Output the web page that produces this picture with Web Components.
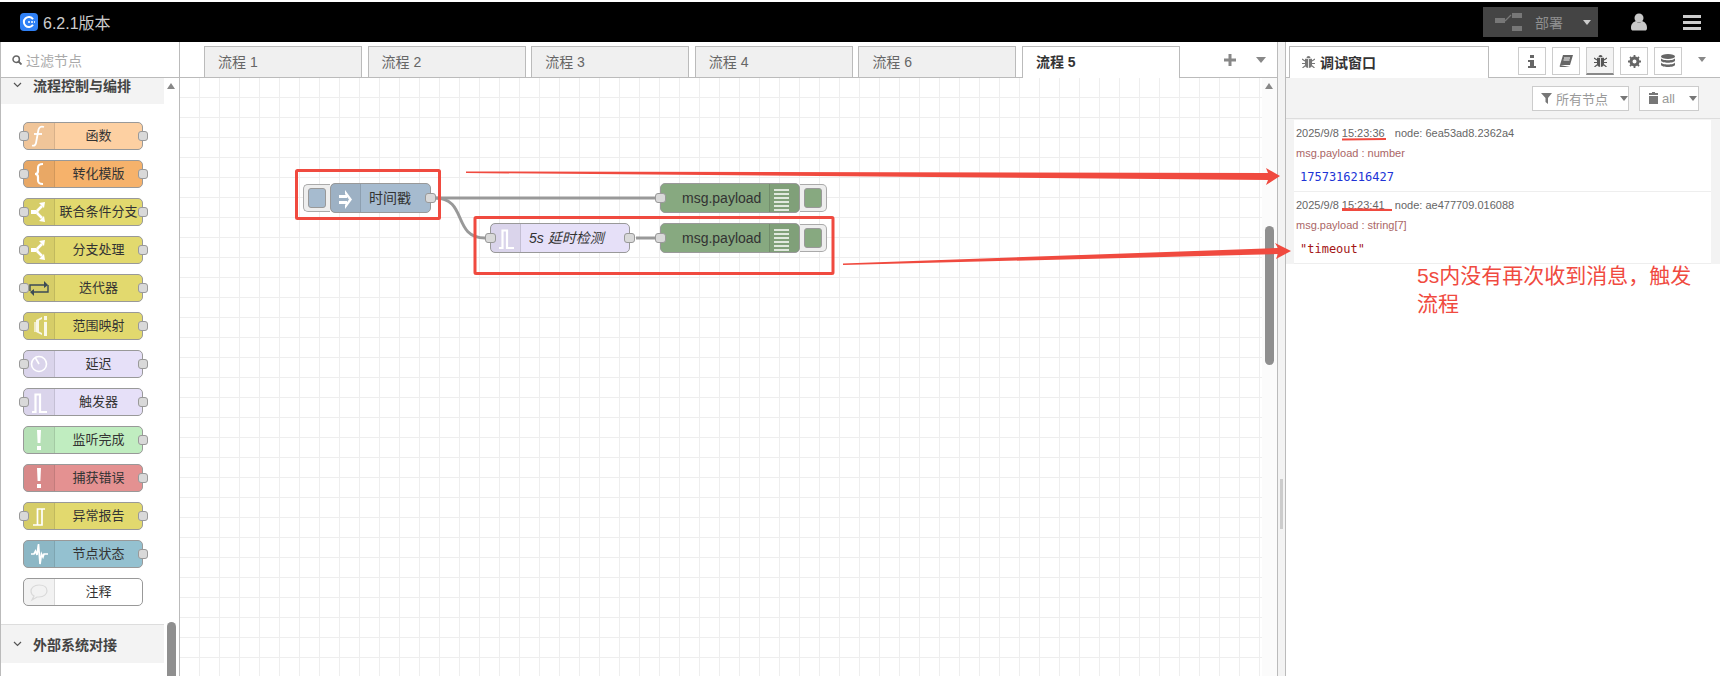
<!DOCTYPE html>
<html lang="zh">
<head>
<meta charset="utf-8">
<title>流程编辑器</title>
<style>
  html, body { margin: 0; height: 676px; overflow: hidden; background: #fff; }
  body { font-family: "Liberation Sans", "Noto Sans CJK SC", sans-serif; }
  editor-app { height: 676px; }
</style>
</head>
<body>
<editor-app>
  <top-bar slot="top"></top-bar>
  <node-palette slot="left">
    <palette-node icon="fn" color="#fdd0a2" in out>函数</palette-node>
    <palette-node icon="brace" color="#f6b26b" in out>转化模版</palette-node>
    <palette-node icon="switch" color="#e2d96e" in out>联合条件分支</palette-node>
    <palette-node icon="switch" color="#e2d96e" in out>分支处理</palette-node>
    <palette-node icon="loop" color="#e2d96e" in out>迭代器</palette-node>
    <palette-node icon="range" color="#e2d96e" in out>范围映射</palette-node>
    <palette-node icon="clock" color="#e6e0f8" in out>延迟</palette-node>
    <palette-node icon="pulse" color="#e6e0f8" in out>触发器</palette-node>
    <palette-node icon="alert" color="#c0edc0" out>监听完成</palette-node>
    <palette-node icon="alert" color="#e49191" out>捕获错误</palette-node>
    <palette-node icon="report" color="#e2d96e" in out>异常报告</palette-node>
    <palette-node icon="wave" color="#94c1d0" out>节点状态</palette-node>
    <palette-node icon="bubble" color="#ffffff">注释</palette-node>
  </node-palette>
  <flow-canvas slot="center">
    <flow-node x="330" y="183" w="101" color="#a6bbcf" icon="arrow" button="left" out>时间戳</flow-node>
    <flow-node x="660" y="183" w="140" color="#87a980" icon="list" button="right" in>msg.payload</flow-node>
    <flow-node x="490" y="223" w="140" color="#e6e0f8" icon="pulse" in out italic>5s 延时检测</flow-node>
    <flow-node x="660" y="223" w="140" color="#87a980" icon="list" button="right" in>msg.payload</flow-node>
  </flow-canvas>
  <debug-sidebar slot="right">
    <debug-message date="2025/9/8" time="15:23:36" node="6ea53ad8.2362a4" path="msg.payload : number" kind="number">1757316216427</debug-message>
    <debug-message date="2025/9/8" time="15:23:41" node="ae477709.016088" path="msg.payload : string[7]" kind="string">"timeout"</debug-message>
  </debug-sidebar>
  <red-marks slot="over"></red-marks>
</editor-app>

<script>
// white glyphs are drawn in a 30x28 box, same box for palette and canvas nodes
const NODE_ICONS = {
  fn: '<path d="M20 5c-3-1-5 0-5.600 3L12 21c-.5 2.500-2 3-4 2.500" fill="none" stroke="#fff" stroke-width="1.800"/><path d="M10 12h8" stroke="#fff" stroke-width="1.800"/>',
  brace: '<path d="M19 4c-4 0-5 1-5 4v3c0 2-1 3-3 3 2 0 3 1 3 3v3c0 3 1 4 5 4" fill="none" stroke="#fff" stroke-width="2.200"/>',
  switch: '<path d="M7 12h5l3 2-3 2H7z" fill="#fff"/><path d="M13 13l5-5M13 15l5 5" stroke="#fff" stroke-width="2.600"/><path d="M15 5l6-1-1 6zM15 23l6 1-1-6z" fill="#fff"/>',
  loop: '<path d="M6 17v-6h15M24 11v7H9" fill="none" stroke="#3c4a55" stroke-width="1.400"/><path d="M20 7l4 4-4 3zM10 15l-4 3 4 4z" fill="#3c4a55"/>',
  range: '<path d="M20 4h3v20h-3zM12 8l6-3v2l-3 1.500v11L18 21v2l-6-3z" fill="#fff" opacity=".85"/><path d="M20 8h3v2h-3z" fill="#e2d96e"/><path d="M10 10h2v10h-2z" fill="#fff" opacity=".6"/>',
  clock: '<circle cx="15" cy="14" r="7.500" fill="none" stroke="#fff" stroke-width="1.600"/><path d="M11.500 8l3.500 6" stroke="#fff" stroke-width="1.600"/>',
  pulse: '<path d="M8 24h3.500V6.500h4.500V24h7" fill="none" stroke="#fff" stroke-width="2.200"/>',
  report: '<path d="M9 23h4.500V7H21M18 7v16h-4.500" fill="none" stroke="#fff" stroke-width="1.700"/>',
  alert: '<path d="M13 4h4l-.6 13h-2.800zM13 20h4v4h-4z" fill="#fff"/>',
  wave: '<path d="M7 14h3l1.500-3 1.500 4 1.500-11 1.500 20 1.500-10 1.500 3 1-3h4" fill="none" stroke="#fff" stroke-width="1.700"/>',
  bubble: '<path d="M15 7c6 0 8 3 8 6 0 3-3 6-8 6h-2l-5 3 2-4c-2-1-3-3-3-5 0-3 3-6 8-6z" fill="none" stroke="#d9d9d9" stroke-width="1.200"/>',
  arrow: '<path d="M8 11h8v3H8zM8 17h8v3H8zM14 6l7 9.500-7 9.500v-4l4-5.500-4-5.500z" fill="#fff"/>',
  list: '<path d="M4 6h15M4 10h15M4 14h15M4 18h15M4 22h15M4 26h15" stroke="#fff" stroke-width="1.400"/>'
};

class EditorApp extends HTMLElement {
  constructor() {
    super();
    this.attachShadow({ mode: 'open' });
    this.shadowRoot.innerHTML = `
      <style>
        :host { display: flex; flex-direction: column; position: relative; width: 1720px; overflow: hidden; }
        .main { flex: 1; display: flex; min-height: 0; }
        .sep { width: 7px; flex: none; background: #f3f3f3; border-left: 1px solid #bbb; border-right: 1px solid #bbb; display: flex; align-items: center; justify-content: center; }
        .sep i { display: block; width: 3px; height: 50px; background: #ccc; margin-top: 290px; }
      </style>
      <slot name="top"></slot>
      <div class="main">
        <slot name="left"></slot>
        <slot name="center"></slot>
        <div class="sep"><i></i></div>
        <slot name="right"></slot>
      </div>
      <slot name="over"></slot>
    `;
  }
}

class TopBar extends HTMLElement {
  constructor() {
    super();
    this.attachShadow({ mode: 'open' });
    this.shadowRoot.innerHTML = `
      <style>
        :host { display: flex; align-items: center; height: 40px; margin-top: 2px; background: #000; color: #ccc; flex: none; }
        .logo { margin-left: 20px; width: 18px; height: 18px; }
        .title { margin-left: 5px; font-size: 16px; }
        .deploy { margin-left: auto; width: 115px; height: 30px; background: #444; display: flex; align-items: center; color: #8f8f8f; font-size: 14px; }
        .deploy svg { margin-left: 12px; }
        .deploy span { margin-left: 12px; }
        .deploy b { margin-left: 20px; border: 4.500px solid transparent; border-top: 5px solid #ccc; border-bottom: 0; }
        .user { margin-left: 33px; }
        .menu { margin-left: 36px; margin-right: 19px; }
      </style>
      <svg class="logo" viewBox="0 0 18 18">
        <rect width="18" height="18" rx="4" fill="#2f80f5"/>
        <path d="M13 6.200A5 5 0 1 0 13 11.800" fill="none" stroke="#fff" stroke-width="2"/>
        <path d="M8 9h7" stroke="#fff" stroke-width="1.600" stroke-dasharray="2 1"/>
      </svg>
      <span class="title">6.2.1版本</span>
      <div class="deploy">
        <svg width="28" height="20" viewBox="0 0 28 20">
          <path d="M0 6h10v5H0zM17 1h10v5H17zM17 14h10v5H17z" fill="#777"/>
          <path d="M10 9l6-6" stroke="#777" stroke-width="1.200"/>
        </svg>
        <span>部署</span><b></b>
      </div>
      <svg class="user" width="16" height="18" viewBox="0 0 16 18">
        <circle cx="8" cy="5" r="4.500" fill="#c8c8c8"/>
        <path d="M5 8c-3 1-5 3-5 7 0 2 1 2.500 2 2.500h12c1 0 2-.5 2-2.500 0-4-2-6-5-7-1.500 2-4.500 2-6 0z" fill="#c8c8c8"/>
      </svg>
      <svg class="menu" width="18" height="15" viewBox="0 0 18 15">
        <path d="M0 0h18v3H0zM0 6h18v3H0zM0 12h18v3H0z" fill="#ccc"/>
      </svg>
    `;
  }
}

class NodePalette extends HTMLElement {
  constructor() {
    super();
    this.attachShadow({ mode: 'open' });
    this.shadowRoot.innerHTML = `
      <style>
        :host { display: flex; flex-direction: column; position: relative; flex: none; box-sizing: border-box; border-left: 1px solid #bbb; border-right: 1px solid #bbb; width: 180px; overflow: hidden; }
        .filter { height: 35px; flex: none; border-bottom: 1px solid #bbb; display: flex; align-items: center; padding-left: 11px; gap: 4px; font-size: 14px; color: #aaa; }
        .cat { width: 163px; background: #f3f3f3; display: flex; align-items: center; font-size: 14px; font-weight: bold; color: #444; flex: none; }
        .cat svg { margin: 0 11px 0 12px; }
        .cat.first { height: 26px; align-items: flex-start; }
        .cat.first span { margin-top: -3px; }
        .cat.first svg { margin-top: 4px; }
        .cat.last { height: 39px; margin-top: 18px; border-top: 1px solid #ddd; box-sizing: border-box; }
        .list { width: 163px; box-sizing: border-box; display: flex; flex-direction: column; gap: 10px; padding: 18px 0 0 22px; flex: none; }
        .up { position: absolute; left: 166px; top: 41px; border: 4.500px solid transparent; border-bottom: 6px solid #888; border-top: 0; }
        .thumb { position: absolute; left: 166px; top: 580px; width: 9px; height: 60px; background: #8f8f8f; border-radius: 5px; }
      </style>
      <div class="filter">
        <svg width="10" height="10" viewBox="0 0 10 10"><circle cx="4.200" cy="4.200" r="3.200" fill="none" stroke="#666" stroke-width="1.500"/><path d="M6.500 6.500L9.500 9.500" stroke="#666" stroke-width="1.800"/></svg>
        <span>过滤节点</span>
      </div>
      <div class="cat first">
        <svg width="9" height="6" viewBox="0 0 9 6"><path d="M1 1l3.500 3.500L8 1" fill="none" stroke="#555" stroke-width="1.200"/></svg>
        <span>流程控制与编排</span>
      </div>
      <div class="list"><slot></slot></div>
      <div class="cat last">
        <svg width="9" height="6" viewBox="0 0 9 6"><path d="M1 1l3.500 3.500L8 1" fill="none" stroke="#555" stroke-width="1.200"/></svg>
        <span>外部系统对接</span>
      </div>
      <div class="up"></div>
      <div class="thumb"></div>
    `;
  }
}

class PaletteNode extends HTMLElement {
  constructor() {
    super();
    this.attachShadow({ mode: 'open' });
  }
  connectedCallback() {
    const color = this.getAttribute('color') || '#ddd';
    const icon = NODE_ICONS[this.getAttribute('icon')] || '';
    this.shadowRoot.innerHTML = `
      <style>
        :host { display: flex; position: relative; width: 120px; height: 28px; box-sizing: border-box; background: ${color}; border: 1px solid #999; border-radius: 5px; font-size: 13px; color: #333; flex: none; }
        .icon { width: 30px; flex: none; background: rgba(0,0,0,.05); border-right: 1px solid rgba(0,0,0,.1); border-radius: 4px 0 0 4px; }
        .icon svg { display: block; }
        .label { flex: 1; text-align: center; line-height: 26px; white-space: nowrap; }
        .port { position: absolute; top: 8px; width: 10px; height: 10px; box-sizing: border-box; background: #d9d9d9; border: 1px solid #999; border-radius: 3px; }
        .in { left: -5px; }
        .out { right: -6px; }
      </style>
      <div class="icon"><svg width="30" height="26" viewBox="0 1 30 26">${icon}</svg></div>
      <div class="label"><slot></slot></div>
      ${this.hasAttribute('in') ? '<div class="port in"></div>' : ''}
      ${this.hasAttribute('out') ? '<div class="port out"></div>' : ''}
    `;
  }
}

class FlowCanvas extends HTMLElement {
  constructor() {
    super();
    this.attachShadow({ mode: 'open' });
    this.shadowRoot.innerHTML = `
      <style>
        :host { display: flex; flex-direction: column; flex: 1; min-width: 0; position: relative; }
        .tabs { height: 35px; flex: none; border-bottom: 1px solid #bbb; display: flex; align-items: flex-end; gap: 5.600px; padding-left: 24px; position: relative; font-size: 14px; color: #666; }
        .tab { width: 158px; height: 31px; box-sizing: border-box; border: 1px solid #bbb; border-bottom: 0; background: #f0f0f0; padding-left: 13px; line-height: 30px; }
        .tab.on { background: #fff; height: 32px; margin-bottom: -1px; font-weight: bold; color: #333; line-height: 31px; }
        .tools { position: absolute; right: 0; top: 0; bottom: 0; display: flex; align-items: center; }
        .plus { margin-right: 20px; }
        .caret { margin-right: 11px; border: 5px solid transparent; border-top: 6px solid #888; border-bottom: 0; }
        .body { flex: 1; display: flex; min-height: 0; }
        .grid { flex: 1; background-color: #fff;
          background-image: linear-gradient(to right, transparent 19px, #eee 19px, #eee 20px), linear-gradient(to bottom, transparent 19px, #eee 19px, #eee 20px);
          background-size: 20px 20px; }
        .bar { width: 15px; flex: none; background: #fbfbfb; position: relative; }
        .bar .up { position: absolute; left: 3px; top: 5px; border: 4.500px solid transparent; border-bottom: 6px solid #888; border-top: 0; }
        .bar .thumb { position: absolute; left: 3px; top: 148px; width: 9px; height: 139px; background: #8f8f8f; border-radius: 5px; }
        svg.wires { position: absolute; left: -180px; top: -42px; pointer-events: none; }
        .nodes { position: absolute; left: -180px; top: -42px; }
      </style>
      <div class="tabs">
        <div class="tab">流程 1</div><div class="tab">流程 2</div><div class="tab">流程 3</div>
        <div class="tab">流程 4</div><div class="tab">流程 6</div><div class="tab on">流程 5</div>
        <div class="tools">
          <svg class="plus" width="12" height="12" viewBox="0 0 12 12"><path d="M0 4.500h12v3H0zM4.500 0h3v12h-3z" fill="#888"/></svg>
          <div class="caret"></div>
        </div>
      </div>
      <div class="body">
        <div class="grid"></div>
        <div class="bar"><div class="up"></div><div class="thumb"></div></div>
      </div>
      <svg class="wires" width="1720" height="676">
        <g fill="none" stroke="#999" stroke-width="3">
          <path d="M435 198H655"/>
          <path d="M435 198C468 198 452 238 485 238"/>
          <path d="M636 238H655"/>
        </g>
      </svg>
      <div class="nodes"><slot></slot></div>
    `;
  }
}

class FlowNode extends HTMLElement {
  constructor() {
    super();
    this.attachShadow({ mode: 'open' });
  }
  connectedCallback() {
    const x = this.getAttribute('x');
    const y = this.getAttribute('y');
    const w = this.getAttribute('w');
    const color = this.getAttribute('color');
    const icon = NODE_ICONS[this.getAttribute('icon')] || '';
    const button = this.getAttribute('button');
    const right = button === 'right';
    this.shadowRoot.innerHTML = `
      <style>
        :host { display: flex; position: absolute; left: ${x}px; top: ${y}px; width: ${w}px; height: 30px; box-sizing: border-box; background: ${color}; border: 1px solid #999; border-radius: 5px; font-size: 14px; color: #333; flex-direction: ${right ? 'row-reverse' : 'row'}; ${this.hasAttribute('italic') ? 'font-style: italic;' : ''} }
        .icon { width: 29px; flex: none; background: rgba(0,0,0,.05); ${right ? 'border-left' : 'border-right'}: 1px solid rgba(0,0,0,.1); }
        .icon svg { display: block; }
        .label { flex: 1; padding-left: ${right ? 21 : 8}px; line-height: 28px; white-space: nowrap; }
        .port { position: absolute; top: 9px; width: 11px; height: 10px; box-sizing: border-box; background: #d9d9d9; border: 1px solid #999; border-radius: 3px; }
        .in { left: -6px; }
        .out { right: -6px; }
        .btn { position: absolute; top: 0; width: 27px; height: 28px; box-sizing: border-box; background: #eee; border: 1px solid #aaa; }
        .btn i { position: absolute; top: 3px; width: 18px; height: 20px; box-sizing: border-box; background: ${color}; border: 1px solid #999; border-radius: 3px; }
        .btn.left { left: -28px; border-right: 0; border-radius: 5px 0 0 5px; }
        .btn.left i { left: 4px; }
        .btn.right { right: -28px; border-left: 0; border-radius: 0 5px 5px 0; }
        .btn.right i { right: 4px; }
      </style>
      <div class="icon"><svg width="29" height="28" viewBox="0 0 29 28">${icon}</svg></div>
      <div class="label"><slot></slot></div>
      ${this.hasAttribute('in') ? '<div class="port in"></div>' : ''}
      ${this.hasAttribute('out') ? '<div class="port out"></div>' : ''}
      ${button ? `<div class="btn ${button}"><i></i></div>` : ''}
    `;
  }
}

const BUG_ICON = (c) => `<path d="M4.500 3a2 2 0 0 1 4 0z" fill="${c}"/><path d="M3 3.800h7V10c0 2-1.500 3-3.500 3S3 12 3 10z" fill="${c}"/><path d="M6.500 4v9" stroke="#fff" stroke-width=".8"/><path d="M0 4l3 2M13 4l-3 2M0 8.500h3M13 8.500h-3M.5 13l3-2.500M12.500 13l-3-2.500" stroke="${c}" stroke-width="1.100"/>`;

class DebugSidebar extends HTMLElement {
  constructor() {
    super();
    this.attachShadow({ mode: 'open' });
    this.shadowRoot.innerHTML = `
      <style>
        :host { display: flex; flex-direction: column; flex: none; width: 434px; font-size: 14px; position: relative; }
        .head { height: 35px; flex: none; border-bottom: 1px solid #bbb; display: flex; align-items: flex-end; position: relative; padding-left: 3px; }
        .tab { width: 200px; height: 32px; margin-bottom: -1px; box-sizing: border-box; border: 1px solid #bbb; border-bottom: 0; background: #fff; display: flex; align-items: center; padding: 0 0 2px 12px; gap: 5px; font-weight: bold; color: #333; }
        .icons { position: absolute; left: 232px; top: 5px; display: flex; gap: 6px; }
        .ib { width: 28px; height: 28px; box-sizing: border-box; border: 1px solid #ccc; display: flex; align-items: center; justify-content: center; background: #fff; }
        .ib.on { background: #f3f3f3; border-bottom: 2px solid #888; }
        .more { position: absolute; left: 412px; top: 15px; border: 4.500px solid transparent; border-top: 5px solid #888; border-bottom: 0; }
        .tool { height: 41px; flex: none; box-sizing: border-box; background: #f3f3f3; border-bottom: 1px solid #ddd; display: flex; align-items: center; justify-content: flex-end; gap: 10px; padding-right: 21px; }
        .btn { height: 25px; box-sizing: border-box; border: 1px solid #ccc; background: #fff; display: flex; align-items: center; color: #999; font-size: 13px; white-space: nowrap; flex: none; }
        .btn b { border: 4px solid transparent; border-top: 5px solid #777; border-bottom: 0; }
        .msgs { background: #f3f3f3; padding: 1px 9px 0 8px; flex: none; }
        .rest { flex: 1; background: #fff; }
        .a { width: 97px; padding-left: 8px; gap: 3px; }
        .a b { margin-left: 9px; }
        .c { width: 60px; padding-left: 8px; gap: 3px; }
        .c b { margin-left: 11px; }
      </style>
      <div class="head">
        <div class="tab">
          <svg width="13" height="13" viewBox="0 0 13 13">${BUG_ICON('#777')}</svg>
          <span>调试窗口</span>
        </div>
        <div class="icons">
          <div class="ib"><svg width="8" height="13" viewBox="0 0 8 13"><path d="M2 0h4v3H2zM0 5h6v6h2v2H0v-2h2V7H0z" fill="#666"/></svg></div>
          <div class="ib"><svg width="14" height="12" viewBox="0 0 14 12"><path d="M4 0h10l-3 10H1zM1 10c-1 2 0 2 2 2h8" fill="#666"/><path d="M5 3h6M4.500 5h6" stroke="#fff"/></svg></div>
          <div class="ib on"><svg width="13" height="13" viewBox="0 0 13 13">${BUG_ICON('#555')}</svg></div>
          <div class="ib"><svg width="13" height="13" viewBox="0 0 13 13"><circle cx="6.500" cy="6.500" r="3.500" fill="none" stroke="#666" stroke-width="3"/><path d="M6.500 0v13M0 6.500h13M2 2l9 9M11 2l-9 9" stroke="#666" stroke-width="1.800" stroke-dasharray="2.500 8 2.500 0"/></svg></div>
          <div class="ib"><svg width="14" height="15" viewBox="0 0 14 15"><ellipse cx="7" cy="2.500" rx="7" ry="2.500" fill="#666"/><path d="M0 4v2.500c0 3 14 3 14 0V4c0 3-14 3-14 0zM0 8.200v2.500c0 3 14 3 14 0V8.200c0 3-14 3-14 0z" fill="#666"/></svg></div>
        </div>
        <div class="more"></div>
      </div>
      <div class="tool">
        <div class="btn a">
          <svg width="12" height="11" viewBox="0 0 12 11"><path d="M0 0h11L7 5v6L4.500 9V5z" fill="#777"/></svg>
          <span>所有节点</span><b></b>
        </div>
        <div class="btn c">
          <svg width="11" height="12" viewBox="0 0 11 12"><path d="M4 0h3v1h3v2H1V1h3zM1 4h9v8H1z" fill="#777"/></svg>
          <span>all</span><b></b>
        </div>
      </div>
      <div class="msgs"><slot></slot></div>
      <div class="rest"></div>
    `;
  }
}

class DebugMessage extends HTMLElement {
  constructor() {
    super();
    this.attachShadow({ mode: 'open' });
  }
  connectedCallback() {
    const kind = this.getAttribute('kind');
    this.shadowRoot.innerHTML = `
      <style>
        :host { display: block; height: 72px; box-sizing: border-box; background: #fff; border-bottom: 1px solid #eee; padding: 6px 0 0 2px; font-size: 11px; color: #666; position: relative; }
        .meta { height: 14px; line-height: 14px; white-space: nowrap; display: flex; }
        .time { margin-left: 3px; width: 53px; }
        .path { margin-top: 6px; height: 14px; line-height: 14px; color: #a66; }
        .value { margin: 9px 0 0 4px; font: 12px/16px "DejaVu Sans Mono", monospace; color: ${kind === 'number' ? '#2033d6' : '#a31515'}; }
      </style>
      <div class="meta"><span>${this.getAttribute('date')}</span><span class="time">${this.getAttribute('time')}</span><span>node: ${this.getAttribute('node')}</span></div>
      <div class="path">${this.getAttribute('path')}</div>
      <div class="value"><slot></slot></div>
    `;
  }
}

// red hand drawn notes laid over the screenshot
class RedMarks extends HTMLElement {
  constructor() {
    super();
    this.attachShadow({ mode: 'open' });
    this.shadowRoot.innerHTML = `
      <style>
        :host { display: block; position: absolute; left: 0; top: 0; width: 1720px; height: 676px; pointer-events: none; }
        svg { position: absolute; left: 0; top: 0; }
        .note { position: absolute; left: 1417px; top: 262px; width: 285px; font-size: 21px; line-height: 28px; color: #f04a3f; }
      </style>
      <svg width="1720" height="676">
        <g fill="none" stroke="#f04a3f" stroke-width="3">
          <rect x="296.500" y="170.500" width="143" height="48" rx="1"/>
          <rect x="475" y="217.500" width="358" height="56" rx="1"/>
        </g>
        <g fill="#f04a3f">
          <path d="M466 171.500L1268 173L1266 168L1280 176L1266 185L1268 180L466 173z"/>
          <path d="M843 263.500L1278 248L1275 243L1291 251L1276 259L1278 254L843 265z"/>
          <path d="M1342 138.500L1386 138L1386 140L1342 140.500z"/>
          <path d="M1342 208L1392 209L1392 211L1342 211z"/>
        </g>
      </svg>
      <div class="note">5s内没有再次收到消息，触发流程</div>
    `;
  }
}

customElements.define('editor-app', EditorApp);
customElements.define('top-bar', TopBar);
customElements.define('node-palette', NodePalette);
customElements.define('palette-node', PaletteNode);
customElements.define('flow-canvas', FlowCanvas);
customElements.define('flow-node', FlowNode);
customElements.define('debug-sidebar', DebugSidebar);
customElements.define('debug-message', DebugMessage);
customElements.define('red-marks', RedMarks);
</script>
</body>
</html>
